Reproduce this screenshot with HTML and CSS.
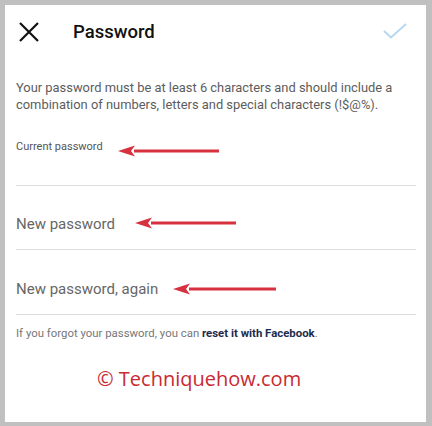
FILE: index.html
```html
<!DOCTYPE html>
<html>
<head>
<meta charset="utf-8">
<link rel="stylesheet" href="styles.css">
</head>
<body>
<div class="panel">
  <header class="header">
    <svg class="close" width="22" height="20" viewBox="0 0 22 20"><path d="M2 1 L20 19 M20 1 L2 19" stroke="#111" stroke-width="2.2" fill="none"/></svg>
    <h1 class="title">Password</h1>
    <svg class="check" width="24" height="16" viewBox="0 0 24 16"><path d="M1 8 L8 14.5 L23 1" stroke="#b5d6ee" stroke-width="1.8" fill="none"/></svg>
  </header>
  <p class="desc">Your password must be at least 6 characters and should include a combination of numbers, letters and special characters (!$@%).</p>
  <div class="field field-first">
    <span class="small-label">Current password</span>
    <svg class="arrow a1" width="102" height="12" viewBox="0 0 102 12"><path d="M16 4.5 H101 V7.5 H16 Z" fill="#d7303f"/><path d="M0 6 L17 0.5 L13 6 L17 11.5 Z" fill="#d7303f"/></svg>
  </div>
  <div class="field">
    <span class="label">New password</span>
    <svg class="arrow a2" width="102" height="12" viewBox="0 0 102 12"><path d="M16 4.5 H101 V7.5 H16 Z" fill="#d7303f"/><path d="M0 6 L17 0.5 L13 6 L17 11.5 Z" fill="#d7303f"/></svg>
  </div>
  <div class="field field-third">
    <span class="label">New password, again</span>
    <svg class="arrow a3" width="104" height="12" viewBox="0 0 104 12"><path d="M16 4.5 H103 V7.5 H16 Z" fill="#d7303f"/><path d="M0 6 L17 0.5 L13 6 L17 11.5 Z" fill="#d7303f"/></svg>
  </div>
  <p class="forgot">If you forgot your password, you can <b class="link">reset it with Facebook</b>.</p>
  <p class="watermark">© Techniquehow.com</p>
</div>
</body>
</html>
```

FILE: styles.css
```css
html, body {
  margin: 0;
  padding: 0;
  background: #c0c0c0;
}
body {
  padding: 5px 6px 4px 5px;
  font-family: Roboto, "Liberation Sans", sans-serif;
}
.panel {
  background: #fff;
  height: 417px;
  padding: 0 10px 0 11px;
  box-sizing: border-box;
  overflow: hidden;
}
.header {
  display: flex;
  align-items: center;
  height: 54px;
}
.close {
  margin-left: 2px;
}
.title {
  margin: 0 0 0 33px;
  font-size: 18.5px;
  font-weight: 500;
  color: #111;
  flex: 1;
}
.check {
  margin-right: 9px;
  margin-top: -2px;
}
.desc {
  margin: 20px 0 0 0;
  font-size: 12.9px;
  line-height: 17px;
  color: #5c5c5c;
}
.field {
  display: flex;
  align-items: center;
  border-bottom: 1px solid #dcdcdc;
  padding: 28px 0 15px 0;
  height: 20px;
}
.field-first {
  margin-top: 27px;
  padding: 0 0 32px 0;
  height: 13px;
}
.field-third {
  padding-top: 29px;
  padding-bottom: 15px;
}
.small-label {
  font-size: 11px;
  line-height: 13px;
  color: #555;
}
.label {
  font-size: 15px;
  line-height: 20px;
  color: #666;
}
.arrow {
  display: block;
  flex: none;
}
.a1 { margin-left: 15px; margin-top: 9px; }
.a2 { margin-left: 20px; margin-top: -2px; }
.a3 { margin-left: 15px; margin-top: -1px; }
.forgot {
  margin: 11px 0 0 0;
  font-size: 11.4px;
  line-height: 14px;
  color: #777;
}
.link {
  color: #1c2c4c;
  font-weight: 700;
}
.watermark {
  margin: 25px 0 0 81px;
  font-family: "Open Sans", sans-serif;
  font-size: 20px;
  line-height: 28px;
  color: #c92a31;
}
```
